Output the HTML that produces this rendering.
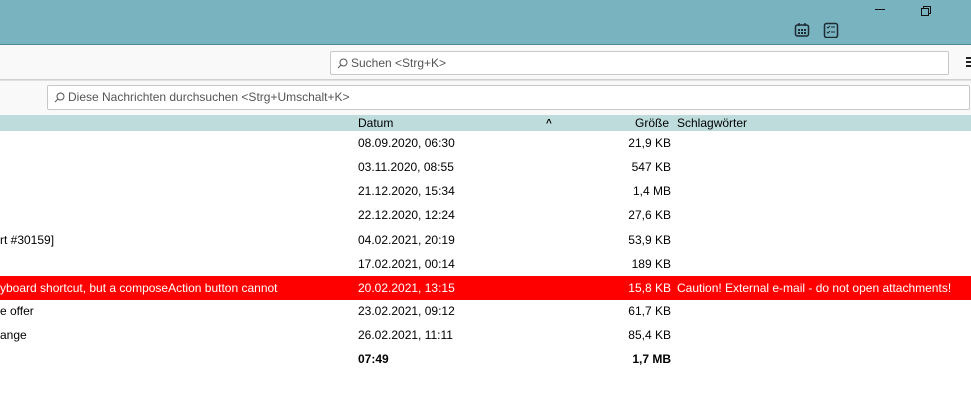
<!DOCTYPE html><html><head><style>
body{margin:0;width:971px;height:404px;overflow:hidden;background:#fff;font-family:"Liberation Sans",sans-serif;font-size:12px;color:#000;position:relative}
.a{position:absolute}
.row{position:absolute;left:0;width:971px;height:24px;line-height:25px}
.row span{position:absolute;white-space:nowrap}
.d{left:358px}.s{right:300px}
.box{position:absolute;background:#fff;border:1px solid #c8c8c8;border-radius:2px;color:#555;line-height:22px;font-size:12px}
.box svg{vertical-align:-2px;margin:0 3px 0 6px}
</style></head><body>
<div class="a" style="left:0;top:0;width:971px;height:44px;background:#7ab3c0;border-bottom:1px solid #4f8a98"></div>
<div class="a" style="left:875px;top:9px;width:10px;height:1px;background:#111"></div>
<div class="a" style="left:923px;top:6px;width:6px;height:6px;border:1px solid #111"></div>
<div class="a" style="left:921px;top:8px;width:6px;height:6px;border:1px solid #111;background:#7ab3c0"></div>
<svg class="a" style="left:794px;top:22px" width="16" height="16" viewBox="0 0 16 16"><rect x="1.5" y="3" width="13" height="11" rx="2" fill="none" stroke="#1a2b33" stroke-width="1.5"/><line x1="5" y1="1" x2="5" y2="4" stroke="#1a2b33" stroke-width="1.5"/><line x1="11" y1="1" x2="11" y2="4" stroke="#1a2b33" stroke-width="1.5"/><rect x="4" y="7" width="2" height="2" fill="#1a2b33"/><rect x="7" y="7" width="2" height="2" fill="#1a2b33"/><rect x="10" y="7" width="2" height="2" fill="#1a2b33"/><rect x="4" y="10" width="2" height="2" fill="#1a2b33"/><rect x="7" y="10" width="2" height="2" fill="#1a2b33"/><rect x="10" y="10" width="2" height="2" fill="#1a2b33"/></svg>
<svg class="a" style="left:823px;top:22px" width="16" height="16" viewBox="0 0 16 16"><rect x="1.5" y="1.5" width="13" height="14" rx="2" fill="none" stroke="#1a2b33" stroke-width="1.5"/><path d="M4 5l1 1 2-2M4 10l1 1 2-2" stroke="#1a2b33" fill="none"/><line x1="8" y1="5" x2="12" y2="5" stroke="#1a2b33"/><line x1="8" y1="10" x2="12" y2="10" stroke="#1a2b33"/></svg>
<div class="a" style="left:0;top:45px;width:971px;height:34px;background:#f9f9f9;border-bottom:1px solid #d0d0d0"></div>
<div class="a" style="left:0;top:80px;width:971px;height:34px;background:#f9f9f9;border-top:1px solid #e0e0e0"></div>
<div class="box" style="left:330px;top:51px;width:617px;height:22px"><svg width="11" height="11" viewBox="0 0 11 11"><circle cx="6.5" cy="4.5" r="3.5" fill="none" stroke="#555"/><line x1="4" y1="7" x2="1" y2="10" stroke="#555"/></svg>Suchen &lt;Strg+K&gt;</div>
<div class="a" style="left:966px;top:57px;width:5px;height:2px;background:#222;box-shadow:0 4px #222,0 8px #222"></div>
<div class="box" style="left:47px;top:85px;width:921px;height:23px"><svg width="11" height="11" viewBox="0 0 11 11"><circle cx="6.5" cy="4.5" r="3.5" fill="none" stroke="#555"/><line x1="4" y1="7" x2="1" y2="10" stroke="#555"/></svg>Diese Nachrichten durchsuchen &lt;Strg+Umschalt+K&gt;</div>
<div class="a" style="left:0;top:115px;width:971px;height:16px;background:#bedcdc;line-height:17px">
<span class="a" style="left:358px">Datum</span><span class="a" style="left:546px;font-size:10px;font-weight:bold">^</span><span class="a" style="right:302px">Größe</span><span class="a" style="left:677px">Schlagwörter</span></div>
<div class="row" style="top:131px"><span class="d">08.09.2020, 06:30</span><span class="s">21,9 KB</span></div>
<div class="row" style="top:155px"><span class="d">03.11.2020, 08:55</span><span class="s">547 KB</span></div>
<div class="row" style="top:179px"><span class="d">21.12.2020, 15:34</span><span class="s">1,4 MB</span></div>
<div class="row" style="top:203px"><span class="d">22.12.2020, 12:24</span><span class="s">27,6 KB</span></div>
<div class="row" style="top:228px"><span style="left:0">rt #30159]</span><span class="d">04.02.2021, 20:19</span><span class="s">53,9 KB</span></div>
<div class="row" style="top:252px"><span class="d">17.02.2021, 00:14</span><span class="s">189 KB</span></div>
<div class="row" style="top:276px;background:#f00;color:#fff"><span style="left:0">yboard shortcut, but a composeAction button cannot</span><span class="d">20.02.2021, 13:15</span><span class="s">15,8 KB</span><span style="left:677px">Caution! External e-mail - do not open attachments!</span></div>
<div class="row" style="top:299px"><span style="left:0">e offer</span><span class="d">23.02.2021, 09:12</span><span class="s">61,7 KB</span></div>
<div class="row" style="top:323px"><span style="left:0">ange</span><span class="d">26.02.2021, 11:11</span><span class="s">85,4 KB</span></div>
<div class="row" style="top:347px;font-weight:bold"><span class="d">07:49</span><span class="s">1,7 MB</span></div>
</body></html>
